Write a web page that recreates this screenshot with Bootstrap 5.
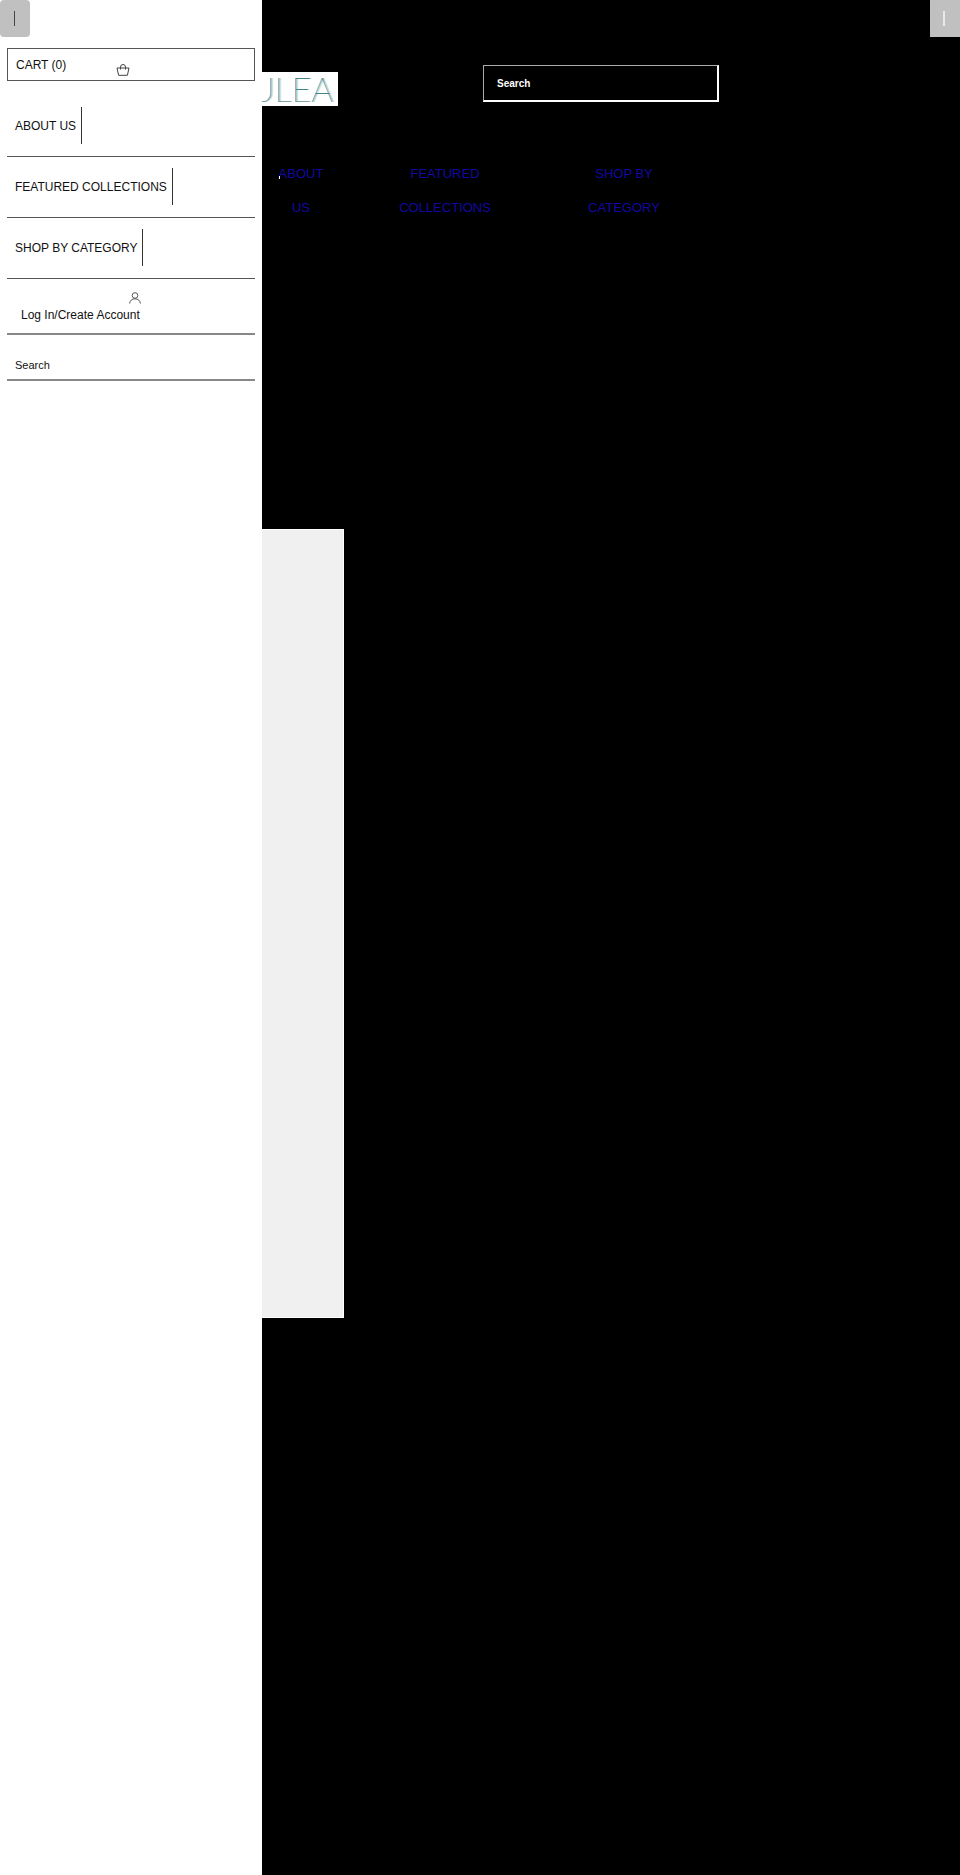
<!DOCTYPE html>
<html lang="en">
<head>
<meta charset="utf-8">
<meta name="viewport" content="width=device-width, initial-scale=1">
<title>Shop</title>
<link href="https://cdn.jsdelivr.net/npm/bootstrap@5.3.0/dist/css/bootstrap.min.css" rel="stylesheet">
<style>
body { font-family: "Liberation Sans", Arial, sans-serif; font-size: 12px; line-height: 16px; color: #111; background: #000; }
.side-menu { width: 262px; }
.side-inner { padding: 0 7px; }
.side-menu a { color: #111; }
.edge-btn { width: 30px; height: 37px; background: #c0c0c0; }
.edge-btn span { width: 1px; height: 15px; background: #444; margin-right: 2px; }
.edge-btn.edge-light span { width: 2px; background: #e8e8e8; }
.cart-link { height: 33px; border: 1px solid #555; margin-top: 11px; padding: 0 8px; }
.cart-link svg { margin: 10px 0 0 50px; }
.menu-list { margin-top: 15px; }
.menu-row { border-bottom: 1px solid #555; padding: 11px 8px 12px; }
.menu-row a { height: 37px; border-right: 1px solid #333; padding-right: 5px; }
.account-row { height: 56px; border-bottom: 2px solid #888; padding: 13px 14px 0; }
.account-row svg { margin: 0 0 3px 108px; }
.search-row { height: 46px; border-bottom: 2px solid #888; padding: 22px 8px 0; }
.search-row input { font-size: 11px; line-height: 16px; }
.search-row input::placeholder { color: #111; opacity: 1; }
.logo-crop { width: 76px; height: 34px; margin-top: 72px; padding-right: 5px; background: #fff; font: 200 34px/34px Lato, sans-serif; color: #2f7a86; text-shadow: 0 0 #2f7a86, 1px 0 #4d929b, 2px 0 #c3c9a4; }
.site-search { width: 236px; height: 37px; margin: 65px 0 1px 145px; padding: 0 13px; background: #000; border: 1px solid #aaa; border-right: 2px solid #fff; border-bottom: 2px solid #fff; color: #fff; font-size: 10px; font-weight: 700; }
.site-search::placeholder { color: #fff; opacity: 1; }
.main-links { margin-top: 51px; display: grid; grid-template-columns: 78px 210px 148px; font-size: 13px; line-height: 34px; }
.main-links a { color: #1209a0; }
.link-dot { width: 1px; height: 3px; left: 17px; top: 19px; background: #fff; }
.hero-panel { width: 82px; height: 789px; margin-top: 304px; background: #f0f0f0; border: solid #fff; border-width: 1px 1px 1px 0; }
</style>
</head>
<body>
<div class="d-flex min-vh-100">
  <aside class="side-menu bg-white flex-shrink-0">
    <button type="button" class="edge-btn border-0 rounded-1 p-0 d-flex align-items-center justify-content-center" aria-label="Close menu"><span></span></button>
    <div class="side-inner">
      <a href="#" class="cart-link d-flex align-items-center text-decoration-none">CART (0)
        <svg width="14" height="12" viewBox="0 0 14 12" fill="none" stroke="#444" aria-hidden="true"><path d="M1 4h12l-1.600 7.300H2.600zM4.500 5.500V3a2.500 2.500 0 0 1 5 0v2.500"/></svg>
      </a>
      <nav class="menu-list">
        <div class="menu-row d-flex"><a href="#" class="d-flex align-items-center text-decoration-none">ABOUT US</a></div>
        <div class="menu-row d-flex"><a href="#" class="d-flex align-items-center text-decoration-none">FEATURED COLLECTIONS</a></div>
        <div class="menu-row d-flex"><a href="#" class="d-flex align-items-center text-decoration-none">SHOP BY CATEGORY</a></div>
      </nav>
      <div class="account-row">
        <a href="#" class="d-block text-decoration-none">
          <svg class="d-block" width="12" height="12" viewBox="0 0 12 12" fill="none" stroke="#555" aria-hidden="true"><circle cx="6" cy="3.500" r="2.800"/><path d="M.6 11.500C1 8.300 3.200 6.800 6 6.800s5 1.500 5.400 4.700"/></svg>
          Log In/Create Account
        </a>
      </div>
      <div class="search-row"><input type="text" class="d-block w-100 border-0 p-0 bg-transparent" placeholder="Search" aria-label="Search the menu"></div>
    </div>
  </aside>
  <main class="flex-grow-1 position-relative">
    <header>
      <div class="d-flex align-items-start">
        <a href="#" class="logo-crop d-flex justify-content-end overflow-hidden text-decoration-none">ULEA</a>
        <input type="search" class="site-search rounded-0" placeholder="Search" aria-label="Search the shop">
      </div>
      <nav class="main-links text-center position-relative">
        <span class="link-dot position-absolute"></span>
        <a href="#" class="text-decoration-none">ABOUT<br>US</a>
        <a href="#" class="text-decoration-none">FEATURED<br>COLLECTIONS</a>
        <a href="#" class="text-decoration-none">SHOP BY<br>CATEGORY</a>
      </nav>
    </header>
    <section class="hero-panel"></section>
    <button type="button" class="edge-btn edge-light border-0 p-0 d-flex align-items-center justify-content-center position-absolute top-0 end-0" aria-label="Open panel"><span></span></button>
  </main>
</div>
<script src="https://cdn.jsdelivr.net/npm/bootstrap@5.3.0/dist/js/bootstrap.bundle.min.js"></script>
</body>
</html>
